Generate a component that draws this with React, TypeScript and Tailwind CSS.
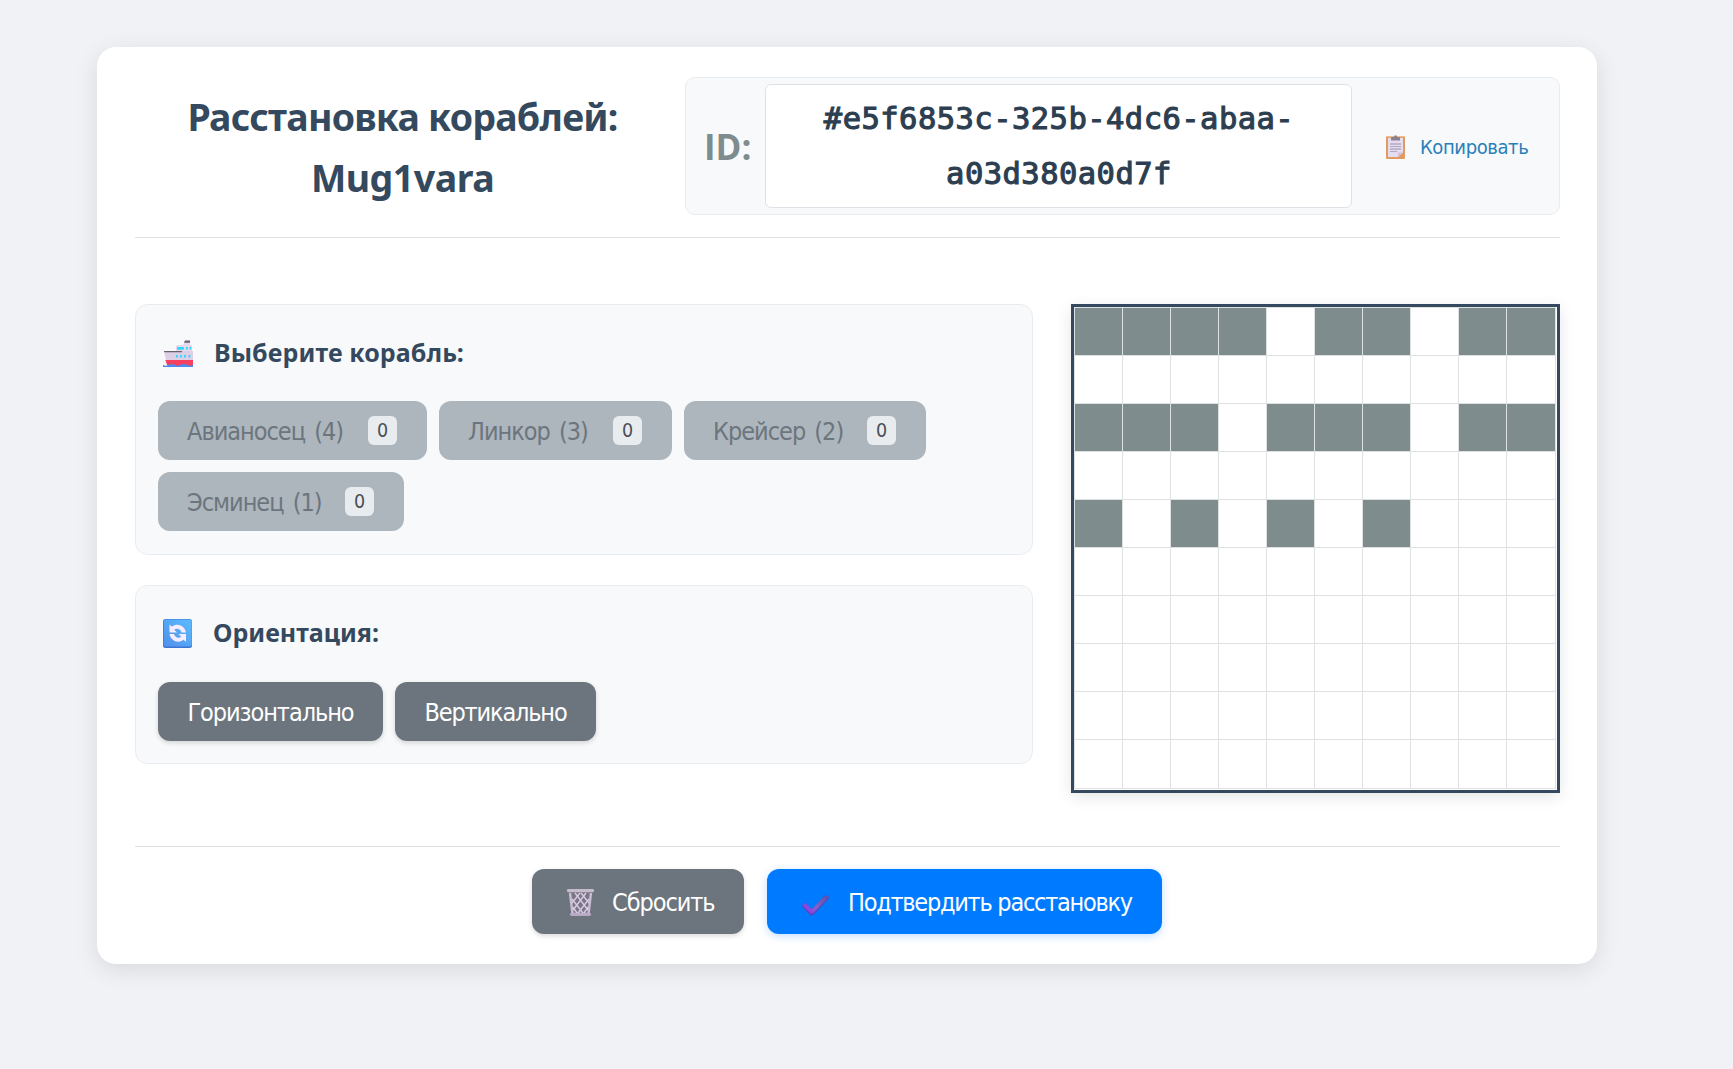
import type { ReactNode } from 'react'

const BOARD = [
  '1111011011',
  '0000000000',
  '1110111011',
  '0000000000',
  '1010101000',
  '0000000000',
  '0000000000',
  '0000000000',
  '0000000000',
  '0000000000',
]

const SHIPS = [
  { name: 'Авианосец (4)', width: 'w-[269px]' },
  { name: 'Линкор (3)', width: 'w-[233px]' },
  { name: 'Крейсер (2)', width: 'w-[242px]' },
  { name: 'Эсминец (1)', width: 'w-[246px]' },
]

function ClipboardIcon() {
  return (
    <svg width="19" height="24" viewBox="0 0 19 24" className="shrink-0">
      <rect x="0" y="1" width="19" height="23" rx="1.2" fill="#e09a62" />
      <rect x="0" y="1" width="19" height="1.2" rx=".6" fill="#efbd92" />
      <path d="M2 3h15v14.500l-5 4.500H2z" fill="#e6dcf0" />
      <path d="M17 17.500 12 22v-4.500z" fill="#cfc0dc" />
      <path d="M5 5.500V3.200Q5 2 6.500 2H8Q8 .300 9.500 .300T11 2h1.500Q14 2 14 3.200v2.300z" fill="#8b818f" />
      <path d="M4 9h11M4 14h11" stroke="#9a90a8" strokeWidth="1.100" />
      <path d="M4 11.500h11M4 16.500h7" stroke="#b3a8c0" strokeWidth="1.100" />
    </svg>
  )
}

function ShipIcon() {
  return (
    <svg width="30" height="27" viewBox="0 0 30 27" className="shrink-0">
      <path d="M14 5h6l2-4h5v4h2v7H13V6z" fill="#e3d9ea" />
      <path d="M22 .500h5v2.200h-6z" fill="#6b5d72" />
      <path d="M1 11h29v9H3z" fill="#dccfe6" />
      <path d="M1 11h18v1.300H1.300z" fill="#6b6070" />
      <rect x="14" y="7" width="7" height="2.800" rx="1" fill="#2fd8fb" />
      <path d="M23 7h1.800v2.500H23zM26.500 7h1.800v2.500h-1.800zM13 15h1.800v2.400H13zM17 15h1.800v2.400H17zM21 15h1.800v2.400H21zM25.500 15h1.800v2.400h-1.800z" fill="#2fd8fb" />
      <path d="M2.300 20H30v6H4.500z" fill="#f5405f" />
      <path d="M0 24.800q3 1.700 6 0t6 0 6 0 6 0 6 0V27H0z" fill="#4a8df2" />
    </svg>
  )
}

function CycleIcon() {
  return (
    <svg width="29" height="29" viewBox="0 0 29 29" className="shrink-0">
      <defs>
        <linearGradient id="tile" x1="1" y1="0" x2="0" y2="1">
          <stop offset="0" stopColor="#5cbcff" />
          <stop offset="1" stopColor="#4f90ec" />
        </linearGradient>
      </defs>
      <rect width="29" height="29" rx="2.500" fill="#3c74d6" />
      <rect x=".7" y=".6" width="28" height="27" rx="2" fill="url(#tile)" />
      <path d="M6.500 5.500v8H14l-2.800-2.700c2.600-2 6.300-1 7.300 2.700H23C21.800 6.500 14 3.600 8.900 7.800z" fill="#f8ecff" />
      <path d="M23 23v-8h-7.500l2.800 2.700c-2.600 2-6.300 1-7.300-2.700H6.500c1.200 7 9 9.900 14.100 5.700z" fill="#f8ecff" />
    </svg>
  )
}

function TrashIcon() {
  return (
    <svg width="27" height="27" viewBox="0 0 27 27" className="shrink-0">
      <path d="M2 3h23l-2.500 23h-18z" fill="#7c7488" />
      <path d="M3 4 5.500 25h16L24 4" fill="none" stroke="#c9bcd3" strokeWidth="2.400" />
      <path d="M8 4l13 17M14 4l8 10M5 10l11 14M6 18l4 6M19 4 6 21M13 4 5 14M22 10 11 24M21 18l-4 6" stroke="#d6cbe0" strokeWidth="1.400" />
      <rect x="0" y="0" width="27" height="3.200" rx="1.200" fill="#c5bccb" />
      <path d="M3 24.200h21v1.300Q24 27 22 27H5Q3 27 3 25.500z" fill="#b8a9c4" />
    </svg>
  )
}

function CheckIcon() {
  return (
    <svg width="27" height="21" viewBox="0 0 27 21" className="shrink-0">
      <defs>
        <linearGradient id="tick" gradientUnits="userSpaceOnUse" x1="8" y1="19" x2="24" y2="3">
          <stop offset="0" stopColor="#8f3ce6" />
          <stop offset=".4" stopColor="#8164cc" />
          <stop offset="1" stopColor="#6553ad" />
        </linearGradient>
      </defs>
      <path d="M2.800 10.800 9.600 18 24.200 2.800" fill="none" stroke="#5546b8" strokeWidth="5" strokeLinecap="round" strokeLinejoin="round" />
      <path d="M3 10.300 9.600 17 23.800 2.600" fill="none" stroke="url(#tick)" strokeWidth="3.800" strokeLinecap="round" strokeLinejoin="round" />
    </svg>
  )
}

function Panel({ icon, title, titleClass, className, children }: { icon: ReactNode; title: string; titleClass: string; className: string; children: ReactNode }) {
  return (
    <section className={`rounded-[12.5px] border border-[#e9ecef] bg-[#f8f9fb] px-[22px] ${className}`}>
      <h3 className="flex h-[40px] items-center pl-[5px] font-['Noto_Sans',sans-serif] text-[25px] font-bold text-[#34495e]">
        {icon}
        <span className={titleClass}>{title}</span>
      </h3>
      <div className="mt-[28px] flex flex-wrap gap-[12px]">{children}</div>
    </section>
  )
}

export default function App() {
  return (
    <div className="h-[1069px] overflow-hidden bg-[#f0f2f5] pt-[47px] pl-[97px] font-['DejaVu_Sans_Condensed','DejaVu_Sans',sans-serif] [font-stretch:condensed]">
      <main className="h-[917px] w-[1500px] rounded-[19px] bg-white px-[38px] pt-[30px] shadow-[0_6px_25px_rgba(0,0,0,0.1)]">
        <header className="flex h-[161px] w-[1425px] items-start border-b border-[#dfe3e4] font-['Noto_Sans',sans-serif]">
          <h1 className="h-[138px] w-[550px] pt-[9px] pr-[15px] text-center text-[37.5px] leading-[61px] font-bold whitespace-nowrap text-[#34495e]">
            <span className="tracking-[-0.75px]">Расстановка кораблей:</span>
            <br />
            <span className="tracking-[-0.5px]">Mug1vara</span>
          </h1>
          <div className="flex h-[138px] w-[875px] items-center rounded-[10px] border border-[#e9ecef] bg-[#f8f9fb] pl-[18px]">
            <span className="w-[61px] pt-[2px] font-['Open_Sans',sans-serif] text-[35px] font-bold text-[#7f8c8d] [font-stretch:normal]">ID:</span>
            <code className="block h-[124px] w-[587px] rounded-[6px] border border-[#dee2e6] bg-white pt-[6px] pl-px text-center font-['DejaVu_Sans_Mono',monospace] text-[30.5px] leading-[55px] font-normal tracking-[0.45px] text-[#2c3e50] [-webkit-text-stroke:1.1px_#2c3e50]">
              #e5f6853c-325b-4dc6-abaa-
              <br />
              a03d380a0d7f
            </code>
            <button className="ml-[34px] flex items-center gap-[15px] pt-[1px] font-['DejaVu_Sans_Condensed','DejaVu_Sans',sans-serif] text-[20px] text-[#2980b9]">
              <ClipboardIcon />
              <span className="tracking-[-0.4px]">Копировать</span>
            </button>
          </div>
        </header>

        <div className="mt-[66px] flex w-[1425px] items-start justify-between">
          <div className="flex w-[898px] flex-col gap-[30px]">
            <Panel icon={<ShipIcon />} title="Выберите корабль:" titleClass="ml-[21px] tracking-[0.1px]" className="pt-[28px] pb-[23px]">
              {SHIPS.map((s) => (
                <button key={s.name} className={`flex h-[59px] items-center justify-between rounded-[12px] bg-[#adb5bd] pr-[30px] pl-[29px] text-[25px] text-[#6c757d] ${s.width}`}>
                  <span className="pt-[3px] tracking-[-1px] whitespace-nowrap [word-spacing:3px]">{s.name}</span>
                  <span className="flex size-[29px] items-center justify-center rounded-[6px] bg-[#e9ecef] pt-px text-[19.5px] text-[#495057]">0</span>
                </button>
              ))}
            </Panel>
            <Panel icon={<CycleIcon />} title="Ориентация:" titleClass="ml-[21px]" className="pt-[27px] pb-[22px] [&>div]:mt-[29px]">
              <button className="h-[59px] w-[225px] rounded-[12px] bg-[#6c757d] pt-[3px] text-[25px] tracking-[-1.05px] text-white shadow-[0_2px_5px_rgba(0,0,0,0.15)]">Горизонтально</button>
              <button className="h-[59px] w-[201px] rounded-[12px] bg-[#6c757d] pt-[3px] text-[25px] tracking-[-1.15px] text-white shadow-[0_2px_5px_rgba(0,0,0,0.15)]">Вертикально</button>
            </Panel>
          </div>

          <div className="size-[489px] border-[3px] border-[#34495e] bg-white shadow-[0_4px_15px_rgba(0,0,0,0.1)]">
            <div className="grid size-[482px] grid-cols-[repeat(9,48px)_50px] grid-rows-[repeat(9,48px)_50px]">
              {BOARD.flatMap((row, y) =>
                [...row].map((c, x) => (
                  <div
                    key={`${x}-${y}`}
                    className={`border-t border-l border-[#dde1e2] ${x === 9 ? 'border-r' : ''} ${y === 9 ? 'border-b' : ''} ${c === '1' ? 'bg-[#7f8c8d]' : 'bg-white'}`}
                  />
                )),
              )}
            </div>
          </div>
        </div>

        <footer className="mt-[53px] flex w-[1425px] gap-[23px] border-t border-[#dfe3e4] pt-[22px] pl-[397px]">
          <button className="flex h-[65px] w-[212px] items-center rounded-[12px] bg-[#6c757d] pl-[35px] text-[25px] text-white shadow-[0_2px_5px_rgba(0,0,0,0.15)]">
            <span className="pt-[2px]">
              <TrashIcon />
            </span>
            <span className="ml-[18px] pt-[3px] tracking-[-1.05px]">Сбросить</span>
          </button>
          <button className="flex h-[65px] w-[395px] items-center rounded-[12px] bg-[#007bff] pl-[35px] text-[25px] whitespace-nowrap text-white shadow-[0_2px_8px_rgba(0,123,255,0.25)]">
            <span className="pt-[8px]">
              <CheckIcon />
            </span>
            <span className="ml-[19px] pt-[3px] tracking-[-1.25px]">Подтвердить расстановку</span>
          </button>
        </footer>
      </main>
    </div>
  )
}
